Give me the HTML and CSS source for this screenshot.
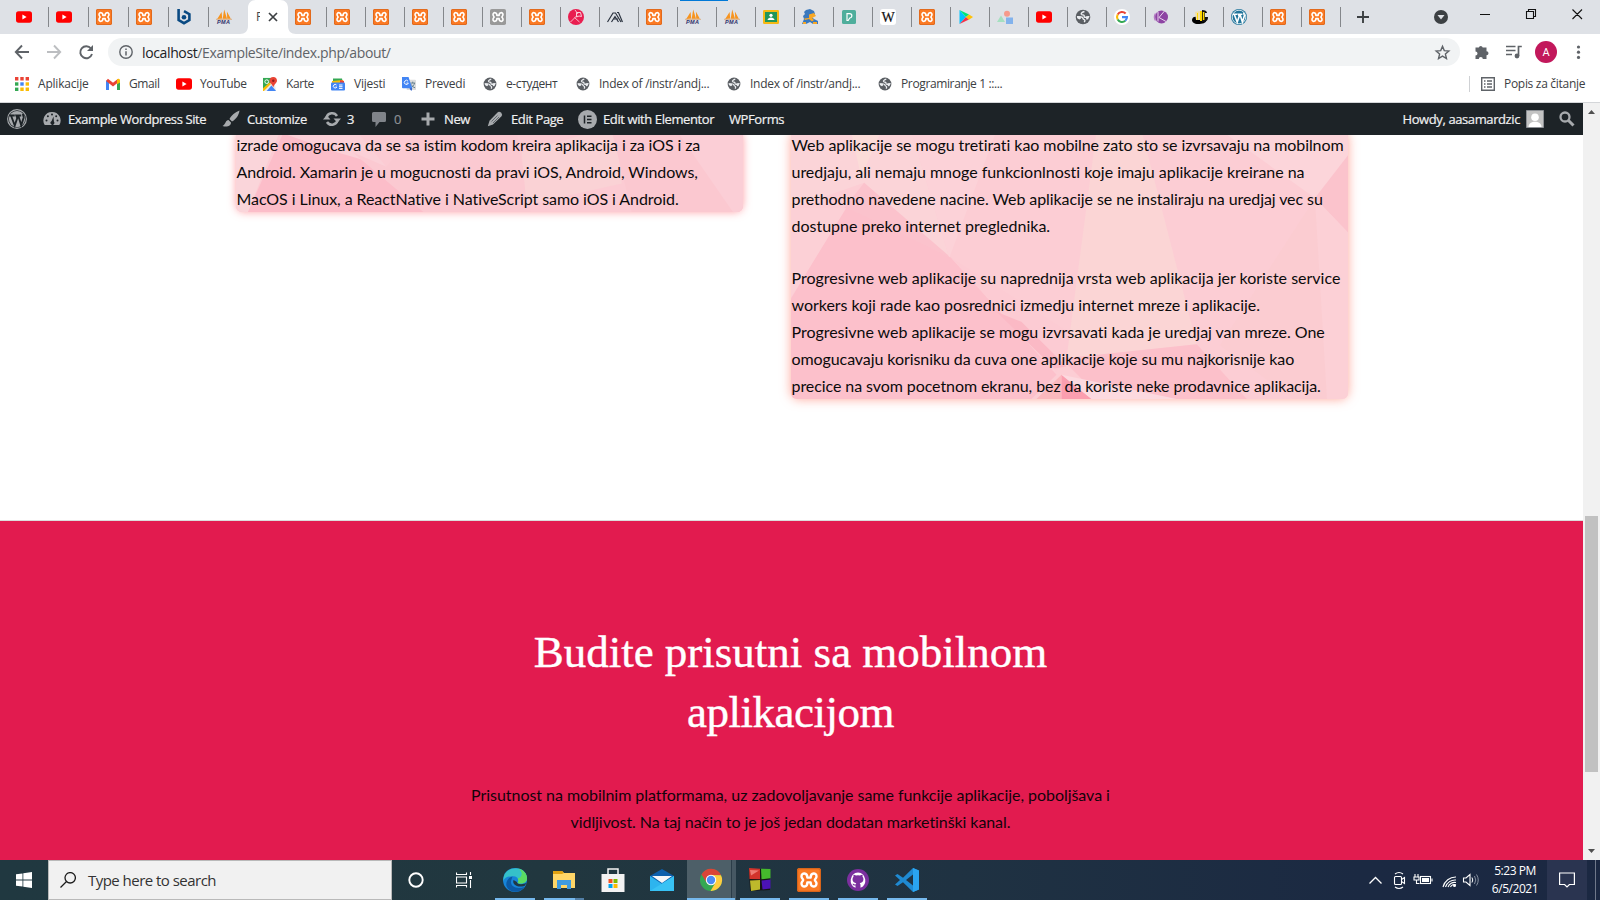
FILE: index.html
```html
<!DOCTYPE html>
<html lang="bs">
<head>
<meta charset="utf-8">
<title>About</title>
<link rel="stylesheet" href="styles.css">
</head>
<body>
<svg class="defs" width="0" height="0">
  <symbol id="yt" viewBox="0 0 16 16"><rect y="2.3" width="16" height="11.4" rx="2.6" fill="#f00"/><path d="M6.4 5.6v4.8l4.2-2.4z" fill="#fff"/></symbol>
  <symbol id="bone" viewBox="0 0 16 16"><path d="M6.900 6.400H9.100C9.100 2.800 13 3 13 5.600 13 7 11.900 7.200 11.900 8S13 9 13 10.400C13 13 9.100 13.200 9.100 9.600H6.900C6.900 13.200 3 13 3 10.400 3 9 4.100 8.800 4.100 8S3 7 3 5.600C3 3 6.900 2.800 6.900 6.400z" fill="none" stroke="#fff" stroke-width="1.600" stroke-linejoin="round"/></symbol>
  <symbol id="xampp" viewBox="0 0 16 16"><rect width="16" height="16" rx="1.8" fill="#fb7a24"/><rect x=".4" y=".4" width="15.2" height="15.2" rx="1.5" fill="none" stroke="#d8641a" stroke-width=".8"/><use href="#bone"/></symbol>
  <symbol id="xgray" viewBox="0 0 16 16"><rect width="16" height="16" rx="1.8" fill="#999"/><use href="#bone"/></symbol>
  <symbol id="hex" viewBox="0 0 16 16"><path d="M2.600 0v11L8 14.200l5.400-3.100V5.200L8 2.200" fill="none" stroke="#0a4a83" stroke-width="2.600"/><circle cx="8" cy="8.200" r="2.300" fill="#0a4a83"/></symbol>
  <symbol id="pma" viewBox="0 0 16 16"><path d="M1.200 10L5.600 3l.6 6.500zM6.700 9.700L8.200.6 11 9.700zM11.200 9.700l-.3-7.300 3.900 7.300z" fill="#f7941e"/><path d="M0 10.300h16" stroke="#d98b3c" stroke-width=".6"/><text x="7.700" y="15.400" class="pma-t">PMA</text></symbol>
  <symbol id="pink" viewBox="0 0 16 16"><circle cx="8" cy="8" r="8" fill="#e91e50"/><path d="M2.500 13L9 6.500M6.500 8.500l5 4.500M7 1l3 4" stroke="#f9b7c7" stroke-width="1"/><path d="M8.500 3.500h4l1 4-2.500-.500-2.500 1z" fill="none" stroke="#f9d0da"/></symbol>
  <symbol id="aa" viewBox="0 0 16 16"><path d="M.5 13L6 4h2.500l5.500 9M4.500 13L8 7.500l3.500 5.500M6 10h5M10 3.500h1.500l4 9.500" fill="none" stroke="#2b3340" stroke-width="1.200"/></symbol>
  <symbol id="class" viewBox="0 0 16 16"><rect y="1" width="16" height="14" rx="1.2" fill="#f5b914"/><rect x="2" y="3" width="12" height="10" fill="#21965a"/><circle cx="8" cy="6.3" r="1.6" fill="#fff"/><path d="M4.500 11c.4-3.400 6.600-3.400 7 0z" fill="#fff"/></symbol>
  <symbol id="camel" viewBox="0 0 16 16"><path d="M4 1l4-1 4 2 1 3-4 2 3 3 4 2v3h-5l-3-2-4 2H0l2-5-1-3 2-2-1-2z" fill="#3a78bd"/><path d="M7 5.500l5-1.500 2 3-4 2 2 2-2 1.500-3-2.500-4 1-1-1.500 5-.5zM11 13h4v2h-4zM1 13h3v2H1z" fill="#f9a825"/></symbol>
  <symbol id="pgreen" viewBox="0 0 16 16"><rect x="1" y="1" width="14" height="14" rx="1.500" fill="#4fae9c"/><path d="M6 11.500V4.700h2.700a2 2 0 010 4.300l-1.500 2.500z" fill="none" stroke="#fff" stroke-width="1.200"/></symbol>
  <symbol id="wiki" viewBox="0 0 16 16"><rect width="16" height="16" rx="3" fill="#fff"/><text x="8" y="13" class="wiki-t">W</text></symbol>
  <symbol id="play" viewBox="0 0 16 16"><path d="M1.500 1v14L8 8z" fill="#00c3ff"/><path d="M1.500 1L8 8l3-2.500z" fill="#00e676"/><path d="M1.500 15L8 8l3 2.600z" fill="#f43249"/><path d="M11 5.400L8 8l3 2.700L15 8z" fill="#ffc107"/></symbol>
  <symbol id="shapes" viewBox="0 0 16 16"><path d="M0 13l4-6.500L8 13z" fill="#a4e0c0"/><circle cx="10" cy="4.700" r="3" fill="#f69a8c"/><rect x="9" y="8.500" width="7" height="6.500" fill="#82b2ec"/></symbol>
  <symbol id="globe" viewBox="0 0 16 16"><circle cx="8" cy="8" r="7.300" fill="#5a5e63"/><path d="M9.500 2.500C7.500 3 5.800 4 6.300 5.200c.5 1 2.300.3 2.800 1.300.4 1-.4 1.400.7 1.800 1.300.4 3-1 4.500-.5M2 7.800c1.500-.1 3-.1 4.500.2 1.800.3 1 1.800 2.300 2.300 1.500.6 1.300 1.700.4 2.900" fill="none" stroke="#eceef1" stroke-width="1.400"/><path d="M1.800 7.500l3.700.2.500 1.800-1.500 1-2-1zM10.500 7.500l3.700-.3-1 3-1.700.5z" fill="#eceef1"/></symbol>
  <symbol id="google" viewBox="0 0 16 16"><circle cx="8" cy="8" r="8" fill="#fff"/><g fill="none" stroke-width="2.100"><path d="M3.700 5.500A5 5 0 0111.600 4.500" stroke="#ea4335"/><path d="M3.700 5.500a5 5 0 000 5" stroke="#fbbc05"/><path d="M3.700 10.500a5 5 0 007.600 1.300" stroke="#34a853"/><path d="M11.300 11.800A5 5 0 0013 8.100H8" stroke="#4285f4"/></g></symbol>
  <symbol id="kk" viewBox="0 0 16 16"><circle cx="8.500" cy="8" r="6.500" fill="#8d44a3"/><path d="M5 3v9.500M11.500 2L6 8.500l7 4" fill="none" stroke="#e8d4ee" stroke-width="1"/><path d="M2.500 4.500q-2 3.500 0 7" fill="none" stroke="#b47cc4" stroke-width="1.500"/></symbol>
  <symbol id="bee" viewBox="0 0 16 16"><path d="M0 11c0-3 3-4 5-3l9 3c1 3-4 4-8 4s-6-2-6-4z" fill="#000"/><path d="M3 3l4-1 4 1v8H4z" fill="#f0dfa8"/><path d="M10 1c3 0 5 1 5 3h-2v4h3c0 4-2 5-6 5z" fill="#111"/><path d="M5 4h1v7H5zM8 2h2v10H8zM10.800 3h1.600v8h-1.600z" fill="#ffd800"/></symbol>
  <symbol id="wpb" viewBox="0 0 16 16"><circle cx="8" cy="8" r="8" fill="#21759b"/><circle cx="8" cy="8" r="6.800" fill="none" stroke="#fff" stroke-width=".8"/><path d="M1.800 5.200h4.400M3.200 5.200l3 8 2-6-.8-2h4M9 5.200l2.400 7.800L13.300 7c.3-1.200-.9-2-.4-3.200" fill="none" stroke="#fff" stroke-width="1.600"/></symbol>
  <symbol id="wpg" viewBox="0 0 16 16"><circle cx="8" cy="8" r="7.500" fill="none" stroke="#a7aaad" stroke-width=".9"/><circle cx="8" cy="8" r="6.500" fill="#a7aaad"/><path d="M1.800 5.200h4.400M3.200 5.200l3 8 2-6-.8-2h4M9 5.200l2.400 7.800L13.300 7c.3-1.200-.9-2-.4-3.200" fill="none" stroke="#1d2327" stroke-width="1.500"/></symbol>
</svg>

<div class="browser">
  <div class="tabs">
    <i class="progress"></i>
    <div class="tab wide"><svg><use href="#yt"/></svg></div>
    <div class="tab wide"><svg><use href="#yt"/></svg></div>
    <div class="tab wide"><svg><use href="#xampp"/></svg></div>
    <div class="tab wide"><svg><use href="#xampp"/></svg></div>
    <div class="tab wide"><svg><use href="#hex"/></svg></div>
    <div class="tab wide bare"><svg><use href="#pma"/></svg></div>
    <div class="tab active"><svg class="tabshape" viewBox="0 0 56 34"><path d="M0 34c5 0 8-3 8-8V8c0-5 3-8 8-8h24c5 0 8 3 8 8v18c0 5 3 8 8 8z" fill="#fff"/></svg><span class="clip">P</span><svg class="close" viewBox="0 0 10 10"><path d="M1 1l8 8M9 1L1 9" stroke="#3c4043" stroke-width="1.700"/></svg></div>
    <div class="tab"><svg><use href="#xampp"/></svg></div>
    <div class="tab"><svg><use href="#xampp"/></svg></div>
    <div class="tab"><svg><use href="#xampp"/></svg></div>
    <div class="tab"><svg><use href="#xampp"/></svg></div>
    <div class="tab"><svg><use href="#xampp"/></svg></div>
    <div class="tab"><svg><use href="#xgray"/></svg></div>
    <div class="tab"><svg><use href="#xampp"/></svg></div>
    <div class="tab"><svg><use href="#pink"/></svg></div>
    <div class="tab"><svg><use href="#aa"/></svg></div>
    <div class="tab"><svg><use href="#xampp"/></svg></div>
    <div class="tab"><svg><use href="#pma"/></svg></div>
    <div class="tab"><svg><use href="#pma"/></svg></div>
    <div class="tab"><svg><use href="#class"/></svg></div>
    <div class="tab"><svg><use href="#camel"/></svg></div>
    <div class="tab"><svg><use href="#pgreen"/></svg></div>
    <div class="tab"><svg><use href="#wiki"/></svg></div>
    <div class="tab"><svg><use href="#xampp"/></svg></div>
    <div class="tab"><svg><use href="#play"/></svg></div>
    <div class="tab"><svg><use href="#shapes"/></svg></div>
    <div class="tab"><svg><use href="#yt"/></svg></div>
    <div class="tab"><svg><use href="#globe"/></svg></div>
    <div class="tab"><svg><use href="#google"/></svg></div>
    <div class="tab"><svg><use href="#kk"/></svg></div>
    <div class="tab"><svg><use href="#bee"/></svg></div>
    <div class="tab"><svg><use href="#wpb"/></svg></div>
    <div class="tab"><svg><use href="#xampp"/></svg></div>
    <div class="tab"><svg><use href="#xampp"/></svg></div>
    <svg class="newtab" viewBox="0 0 12 12"><path d="M6 0v12M0 6h12" stroke="#3c4043" stroke-width="1.900"/></svg>
    <svg class="winctl" viewBox="0 0 166 34"><circle cx="15" cy="17" r="7" fill="#3c4043"/><path d="M11.500 15h7L15 19.500z" fill="#dee1e6"/><path d="M54 14.500h10M100.500 11.500h7v7h-7zM102.500 11v-1.500h7v7H108M146.500 9.500l9.500 9.500M156 9.500l-9.500 9.500" fill="none" stroke="#111" stroke-width="1.100"/></svg>
  </div>

  <div class="toolbar">
    <svg class="nav" viewBox="0 0 96 36"><path d="M29 18H16M22 11.500L15.800 18l6.200 6.500" fill="none" stroke="#5f6368" stroke-width="1.900"/><path d="M47 18h13M54 11.500l6.200 6.500-6.200 6.500" fill="none" stroke="#bcbec1" stroke-width="1.900"/><path d="M91 14.500A6 6 0 1092 20" fill="none" stroke="#5f6368" stroke-width="1.900"/><path d="M93 11v6h-6z" fill="#5f6368"/></svg>
    <div class="omnibox">
      <svg class="info" viewBox="0 0 14 14"><circle cx="7" cy="7" r="6.200" fill="none" stroke="#5f6368" stroke-width="1.400"/><path d="M7 6.200v4.300M7 3.400v1.500" stroke="#5f6368" stroke-width="1.500"/></svg>
      <span class="url"><b>localhost</b>/ExampleSite/index.php/about/</span>
      <svg class="star" viewBox="0 0 24 24"><path d="M12 3.300l2.500 6 6.500.6-4.900 4.300 1.500 6.400-5.600-3.400-5.600 3.400 1.500-6.400L3 9.900l6.500-.6z" fill="none" stroke="#5f6368" stroke-width="2"/></svg>
    </div>
    <svg class="exts" viewBox="0 0 140 36"><path d="M15.500 13.500h3.300a2 2 0 013.900 0h3.800v3.800a2 2 0 010 4V25h-3.700a2 2 0 00-4 0h-3.300v-3.600a2 2 0 000-4z" fill="#5f6368"/><path d="M46 12.500h9.500M46 16.500h9.500M46 20.500h6" stroke="#5f6368" stroke-width="1.700"/><path d="M58.500 22v-9.500h3.300" fill="none" stroke="#5f6368" stroke-width="1.700"/><circle cx="57" cy="22" r="2.400" fill="#5f6368"/><circle cx="86" cy="18" r="11" fill="#c2185b"/><g fill="#5f6368"><circle cx="118.500" cy="13" r="1.600"/><circle cx="118.500" cy="18.200" r="1.600"/><circle cx="118.500" cy="23.400" r="1.600"/></g><text x="86" y="22" class="avatar-t">A</text></svg>
  </div>

  <div class="bookmarks">
    <div class="bm b1"><svg viewBox="0 0 14 14"><g fill="#ea4335"><path d="M0 0h3.400v3.400H0zM5.300 0h3.400v3.400H5.300zM10.600 0H14v3.400h-3.400z"/></g><path d="M0 5.300h3.400v3.400H0z" fill="#34a853"/><path d="M5.300 5.300h3.400v3.400H5.300z" fill="#4285f4"/><path d="M10.600 5.300H14v3.400h-3.400z" fill="#fbbc05"/><path d="M0 10.600h3.400V14H0z" fill="#34a853"/><path d="M5.300 10.600h3.400V14H5.300zM10.600 10.600H14V14h-3.400z" fill="#fbbc05"/></svg><span>Aplikacije</span></div>
    <div class="bm b2"><svg viewBox="0 0 14 14"><path d="M1.500 13V3.500" stroke="#4285f4" stroke-width="3"/><path d="M12.500 13V3.500" stroke="#34a853" stroke-width="3"/><path d="M1 2.800l6 4.800 6-4.800" fill="none" stroke="#ea4335" stroke-width="3"/><path d="M11 2.500c1.500-1.500 3-.5 3 1v2l-3 1.800z" fill="#fbbc05"/></svg><span>Gmail</span></div>
    <div class="bm b3"><svg><use href="#yt"/></svg><span>YouTube</span></div>
    <div class="bm b4"><svg viewBox="0 0 15 15"><path d="M0 1h11v14H0z" fill="#34a853"/><path d="M0 13L12 3l2 12H1z" fill="#e8eaed"/><path d="M4 15l5-6 5 6z" fill="#4285f4"/><path d="M0 12l7-6 1.500 1.500L1 15H0z" fill="#fbbc05"/><path d="M11 0c2.500 0 4 1.600 4 4 0 2.200-2.500 3-4 7-1.500-4-4-4.800-4-7 0-2.400 1.500-4 4-4z" fill="#ea4335"/><circle cx="11" cy="4" r="1.300" fill="#8c1d18"/><circle cx="4" cy="5" r="2" fill="none" stroke="#fff"/></svg><span>Karte</span></div>
    <div class="bm b5"><svg viewBox="0 0 14 14"><path d="M2 1.500h9l1 5H2z" fill="#34a853"/><path d="M1 4l11-1 1 5H1z" fill="#fbbc05"/><path d="M9 3l4 1v3H9z" fill="#ea4335"/><rect y="5.500" width="14" height="8" rx="1" fill="#4285f4"/><path d="M5.500 8a1.800 1.800 0 10.300 2H4.500M8 8h3.500M8 9.700h3.500M8 11.400h3.500" fill="none" stroke="#fff"/></svg><span>Vijesti</span></div>
    <div class="bm b6"><svg viewBox="0 0 15 15"><rect x="5" y="3" width="10" height="11" rx="1" fill="#dcdcdc"/><path d="M9 6.500h5M11.500 5v1.500M13.500 6.500c-.5 2-2 4-4 5M10 8c1 2 2 3 4 3.500" fill="none" stroke="#607d8b"/><path d="M0 0h7l4 12H1q-1 0-1-1z" fill="#4285f4"/><path d="M8 12h3l-1 3z" fill="#1a4fc4"/><path d="M6.500 4.500a2.200 2.200 0 10.300 2H4.800" fill="none" stroke="#fff"/></svg><span>Prevedi</span></div>
    <div class="bm b7"><svg><use href="#globe"/></svg><span>е-студент</span></div>
    <div class="bm b8"><svg><use href="#globe"/></svg><span>Index of /instr/andj...</span></div>
    <div class="bm b8"><svg><use href="#globe"/></svg><span>Index of /instr/andj...</span></div>
    <div class="bm b9"><svg><use href="#globe"/></svg><span>Programiranje 1 ::...</span></div>
    <div class="bm reading"><svg viewBox="0 0 14 14"><path d="M.7.700h12.600v12.600H.7z" fill="none" stroke="#5f6368" stroke-width="1.400"/><path d="M3 4h1.500M6 4h5M3 7h1.500M6 7h5M3 10h1.500M6 10h5" stroke="#5f6368" stroke-width="1.400"/></svg><span>Popis za čitanje</span></div>
  </div>
</div>

<div class="viewport">
  <div class="site">
    <div class="adminbar">
      <div class="ab a0"><svg><use href="#wpg"/></svg></div>
      <div class="ab a1"><svg viewBox="0 0 18 18"><path d="M9 2a8.500 8.500 0 00-7.300 13h14.600A8.500 8.500 0 009 2z" fill="#a7aaad"/><g fill="#1d2327"><circle cx="9" cy="4.500" r="1"/><circle cx="4.900" cy="6.200" r="1"/><circle cx="13.200" cy="6.200" r="1"/><circle cx="3.500" cy="10.500" r="1"/><circle cx="14.500" cy="10.500" r="1"/><path d="M10.500 6.500l.4 5a2 2 0 11-2.300-.5z"/></g></svg><span>Example Wordpress Site</span></div>
      <div class="ab a2"><svg viewBox="0 0 18 18"><path d="M17.500.5c-4 1.500-8.500 5-10 8.500l2.500 2.500C14 9.500 17 5 17.500.5zM6.500 10c-3 0-2.500 4-6 6 4 1.200 8.500.5 8.500-3.500z" fill="#a7aaad"/></svg><span>Customize</span></div>
      <div class="ab a3"><svg viewBox="0 0 18 18"><path d="M3.500 7.500A5.800 5.800 0 0114 6M14.500 10.500A5.800 5.800 0 014 12" fill="none" stroke="#a7aaad" stroke-width="2.500"/><path d="M10.500 8.500H18l-3.600 4.300zM7.500 9.500H0l3.600-4.300z" fill="#a7aaad"/></svg><span>3</span></div>
      <div class="ab a4"><svg viewBox="0 0 16 16"><path d="M2.500 1h11Q15 1 15 2.500v7q0 1.500-1.500 1.500H8.500l-4 5v-5h-2Q1 11 1 9.500v-7Q1 1 2.500 1z" fill="#80848a"/></svg><span class="dim">0</span></div>
      <div class="ab a5"><svg viewBox="0 0 14 14"><path d="M7 .5v13M.5 7h13" stroke="#a7aaad" stroke-width="3"/></svg><span>New</span></div>
      <div class="ab a6"><svg viewBox="0 0 16 16"><path d="M10.500 1.500q1.500-1.500 3.800.3 1.600 2.200 0 3.800L6 13.500.8 15.300l1.700-5.500z" fill="#a7aaad"/><path d="M4.500 10.500l6-6M6 12l6-6" stroke="#50575e" stroke-width=".8"/></svg><span>Edit Page</span></div>
      <div class="ab a7"><svg viewBox="0 0 19 19"><circle cx="9.500" cy="9.500" r="9.500" fill="#a7aaad"/><path d="M6.500 5.500v8M9 6.200h4.500M9 9.500h4.500M9 12.800h4.500" stroke="#1d2327" stroke-width="1.500"/></svg><span>Edit with Elementor</span></div>
      <div class="ab a8"><span>WPForms</span></div>
      <div class="ab a9"><span>Howdy, aasamardzic</span><svg class="gravatar" viewBox="0 0 18 18"><path d="M.5.500h17v17H.5z" fill="#c3c3c3" stroke="#8c8f94"/><circle cx="9" cy="7.200" r="3.800" fill="#fff"/><path d="M2.500 17c0-7 13-7 13 0z" fill="#fff"/></svg><svg class="find" viewBox="0 0 16 16"><circle cx="6" cy="6" r="4.500" fill="none" stroke="#a7aaad" stroke-width="2.300"/><path d="M9.500 9.500l5 5" stroke="#a7aaad" stroke-width="3"/></svg></div>
    </div>

    <div class="columns">
      <div class="card first">
        <svg class="art" viewBox="0 0 506 77" preserveAspectRatio="none"><path d="M0 0h506v77H0z" fill="#fccbd3"/><path d="M0 0h44L12 77H0z" fill="#fad5da"/><path d="M48 0L12 77h178L116 20 100 0z" fill="#fcbdc9"/><path d="M40 0h80l30 34-50-14z" fill="#fbd0d7"/><path d="M116 20l34 14 30-34h100l14 77H187z" fill="#fbc9d1"/><path d="M285 20l75-20h20l5 50-95 20z" fill="#fad2d5"/><path d="M375 0l20 77h111V0z" fill="#fbc8d0"/><path d="M440 0h66v77h-10z" fill="#fbced6"/></svg>
        <p><span class="t10">izrade omogucava da se sa istim kodom kreira aplikacija i za iOS i za</span><br><span class="t9">Android. Xamarin je u mogucnosti da pravi iOS, Android, Windows,</span><br><span class="t7">MacOS i Linux, a ReactNative i NativeScript samo iOS i Android.</span></p>
      </div>
      <div class="card second">
        <svg class="art" viewBox="0 0 556 264" preserveAspectRatio="none"><path d="M0 0h556v264H0z" fill="#fccdd4"/><path d="M0 0h120l38 125L73 51 0 76z" fill="#fbd4d8"/><path d="M60 0h30L70 45z" fill="#fbdcd8"/><path d="M73 51L50 80l110 45z" fill="#fbc2cc"/><path d="M120 0l38 125L205 0z" fill="#fcd2d8"/><path d="M55 75L0 165v99h240l25-24-105-115z" fill="#fcc0cb"/><path d="M0 76v88l55-88z" fill="#fcd0d6"/><path d="M160 125l105 113 20-35z" fill="#fccbd3"/><path d="M205 178l25 10 45 44-12 2z" fill="#fbb9c5"/><path d="M305 0h45l55 210-130 14z" fill="#fbd5d5"/><path d="M430 0h126v30l-33 36z" fill="#fcd5da"/><path d="M523 66l33-42v76z" fill="#fbc3cc"/><path d="M523 66l-95 145 73 53h45z" fill="#fbccd1"/><path d="M523 66l12 198h21V100z" fill="#fcd0d6"/><path d="M270 224l135-14 50 54H310z" fill="#fcc0ca"/><path d="M270 240l-25 24h25z" fill="#fbb8bd"/><path d="M270 240v24h30z" fill="#fb9eaf"/><path d="M270 240l30 24h85z" fill="#fcd9df"/></svg>
        <p><span class="t7">Web aplikacije se mogu tretirati kao mobilne zato sto se izvrsavaju na mobilnom</span><br><span class="t3">uredjaju, ali nemaju mnoge funkcionlnosti koje imaju aplikacije kreirane na</span><br><span class="t8">prethodno navedene nacine. Web aplikacije se ne instaliraju na uredjaj vec su</span><br>dostupne preko internet preglednika.</p>
        <p>Progresivne web aplikacije su naprednija vrsta web aplikacija jer koriste service<br><span class="t3">workers koji rade kao posrednici izmedju internet mreze i aplikacije.</span><br><span class="t3">Progresivne web aplikacije se mogu izvrsavati kada je uredjaj van mreze. One</span><br><span class="t8">omogucavaju korisniku da cuva one aplikacije koje su mu najkorisnije kao</span><br><span class="t8">precice na svom pocetnom ekranu, bez da koriste neke prodavnice aplikacija.</span></p>
      </div>
    </div>

    <div class="cta">
      <h2><span>Budite prisutni sa mobilnom</span><br><span class="l2">aplikacijom</span></h2>
      <p><span class="t4">Prisutnost na mobilnim platformama, uz zadovoljavanje same funkcije aplikacije, poboljšava i</span><br><span class="t8">vidljivost. Na taj način to je još jedan dodatan marketinški kanal.</span></p>
    </div>
  </div>
  <div class="scrollbar"><svg viewBox="0 0 17 17"><path d="M5 11l3.500-4 3.500 4z" fill="#505050"/></svg><div class="thumb"></div><svg class="down" viewBox="0 0 17 17"><path d="M5 6l3.500 4L12 6z" fill="#505050"/></svg></div>
</div>

<div class="taskbar">
  <div class="start"><svg viewBox="0 0 16 16"><path d="M0 2.300L6.500 1.400v6.100H0zM7.300 1.300L16 0v7.500H7.300zM0 8.400h6.500v6.200L0 13.700zM7.300 8.400H16V16l-8.700-1.300z" fill="#fff"/></svg></div>
  <div class="search"><svg viewBox="0 0 16 16"><circle cx="10.200" cy="5.800" r="5.200" fill="none" stroke="#1b1b1b" stroke-width="1.300"/><path d="M6.500 9.500L.5 15.500" stroke="#1b1b1b" stroke-width="1.300"/></svg><span>Type here to search</span></div>
  <div class="sys"><svg viewBox="0 0 16 16"><circle cx="8" cy="8" r="6.700" fill="none" stroke="#fff" stroke-width="1.900"/></svg></div>
  <div class="sys second-sys"><svg viewBox="0 0 16 16"><path d="M.5.500v2h10v-2M.5 15.500v-2h10v2M.5 5h10v6H.5zM14.500 0v3M14.500 8v8" fill="none" stroke="#fff" stroke-width="1.100"/><path d="M13 4h3v3h-3z" fill="#fff"/></svg></div>
  <div class="app open"><svg viewBox="0 0 24 24"><circle cx="12" cy="12" r="12" fill="#1784d8"/><path d="M1 8C4-2 23-3 24 10c0 5-5 6.500-9.500 5 2-2 .5-6.500-3.500-6.800C6 7.800 1.500 9.500.1 13z" fill="#35c1c9"/><path d="M15 .5C21 2 24 6 24 10.500c0 4.500-5 6-9.500 4.500 1.200-1.500.8-3.500.3-4.500C20 9 20 3 15 .5z" fill="#5bdc62"/><path d="M8.500 11.500C6 18 13 22 21.500 19 17 26 6 25 3.500 18c-1-4 1.500-8.500 6-9.500z" fill="#0c59a4"/><path d="M10.500 12c-1.500 4 3 8 11 6l2.500-3.500c-3 2.200-10 2.500-10-.5z" fill="#203744"/></svg></div>
  <div class="app open split"><svg viewBox="0 0 24 24"><path d="M1 3h9l2 2h11v15H1z" fill="#ffd667"/><path d="M1 3h9l2 2-2 1H1z" fill="#e0a112"/><path d="M5 12h14v9h-4v-4H9v4H5z" fill="#3f9be0"/></svg></div>
  <div class="app"><svg viewBox="0 0 24 24"><path d="M7 7V1h10v6" fill="none" stroke="#f5f5f5" stroke-width="1.500"/><path d="M.5 6h23v18H.5z" fill="#f3f3f3"/><path d="M7.500 11h4v4h-4z" fill="#f25022"/><path d="M12.500 11h4v4h-4z" fill="#7fba00"/><path d="M7.500 16h4v4h-4z" fill="#00a4ef"/><path d="M12.500 16h4v4h-4z" fill="#ffb900"/></svg></div>
  <div class="app"><svg viewBox="0 0 24 24"><path d="M0 8l12-7 12 7v15H0z" fill="#0c5fac"/><path d="M0 8l12 8 12-8v15H0z" fill="#2db4ee"/><path d="M2 8h20l-10 7z" fill="#f4f6f8"/><path d="M0 23l24-15v15z" fill="#38c2f4"/></svg></div>
  <div class="app open current"><svg viewBox="0 0 24 24"><circle cx="12" cy="12" r="11" fill="#34a853"/><path d="M2.500 6.500A11 11 0 0122 7H12l-4.500 7.500z" fill="#db4437"/><path d="M22 7.200A11 11 0 0111.500 23l5-8.500L12 7z" fill="#ffcd40"/><circle cx="12" cy="12" r="5.200" fill="#fff"/><circle cx="12" cy="12" r="4.200" fill="#4c8bf5"/></svg></div>
  <div class="app open"><svg viewBox="0 0 24 24"><path d="M1 1h21v21l-20 1z" fill="#151515"/><path d="M1 0l11 .8v10.500L1.500 11z" fill="#d3332b"/><path d="M13 .8L22.500 1v9.300l-9 1z" fill="#45b82c"/><path d="M2 12.500l10-.5v9.500L3 23z" fill="#bdb92b"/><path d="M13.500 12.500l9-1v9l-8 1z" fill="#4b13b5"/><path d="M2 2l9 .5-8 5z" fill="#ef7a72"/></svg></div>
  <div class="app open"><svg><use href="#xampp"/></svg></div>
  <div class="app open"><svg viewBox="0 0 24 24"><circle cx="12" cy="12" r="11" fill="#7b2f9e"/><path d="M12 4.500a8 8 0 00-2.500 15.300v-2.300c-2 .4-2.500-.6-3-1.700 1.400-.2 1.300 1 3.100.6.100-.5.300-.9.700-1.200-4-.5-4.600-4.400-2.800-6.400-.2-.8-.1-1.600.1-2.100 1 0 1.700.4 2.400.9a8 8 0 014 0c.8-.5 1.500-.9 2.400-.9.300.7.300 1.400.1 2.100 1.800 2 1.200 5.900-2.800 6.400.7.600.8 1.300.8 2v2.600A8 8 0 0012 4.500z" fill="#fff"/></svg></div>
  <div class="app open"><svg viewBox="0 0 24 24"><path d="M18 0l6 2.500v19L18 24 8 14.200 2.500 18 0 16.500 5 12 0 7.500 2.500 6 8 9.800zM18 6.500L11 12l7 5.500z" fill="#1f8ad2" fill-rule="evenodd"/><path d="M18 0l6 2.500v19L18 24z" fill="#2aa4f0"/></svg></div>
  <svg class="tray" viewBox="0 0 120 40"><path d="M1.500 23.500l6-6 6 6" fill="none" stroke="#fff" stroke-width="1.300"/><g fill="none" stroke="#fff" stroke-width="1.100"><rect x="26.500" y="16.500" width="7" height="8" rx="1"/><path d="M33.500 19.500l3-2v6l-3-2M27 14q4-3 8 0M27 27q4 3 8 0"/><rect x="52.500" y="16.500" width="10" height="7"/><path d="M64 18.500v3M50 14v3M47 14v3M46 17h5v3h-5zM48.500 20v3.500h3M75 27a13 13 0 0113-10M77.500 27a10 10 0 0110.500-7M80 27a7 7 0 018-4.500M82.500 27a4 4 0 015.500-2"/></g><path d="M54 18h7v4h-7z" fill="#fff"/><circle cx="86.500" cy="25.500" r="1.500" fill="#fff"/><path d="M95.500 18h2.500l4-3.500v11L98 22h-2.500z" fill="none" stroke="#fff" stroke-width="1.100"/><path d="M104 17.500q1.500 2.500 0 5" fill="none" stroke="#fff"/><path d="M106.500 16q2.500 4 0 8M108.500 14.500q3.500 5.500 0 11" fill="none" stroke="#8790a0"/></svg>
  <div class="clock"><span>5:23 PM</span><span class="date">6/5/2021</span></div>
  <div class="notify"><svg viewBox="0 0 16 16"><path d="M.6 1h14.800v11.500h-5L8 15l-2.400-2.500h-5z" fill="none" stroke="#fff" stroke-width="1.200"/></svg></div>
  <div class="peek"></div>
</div>
</body>
</html>
```

FILE: styles.css
```css
* { box-sizing: border-box; }
body { margin: 0; width: 1600px; height: 900px; overflow: hidden; display: flex; flex-direction: column; font-family: "Open Sans", "Noto Sans", sans-serif; background: #fff; }
svg { display: block; flex: none; }
.defs { display: none; }
span { white-space: nowrap; }

/* browser chrome */
.browser { height: 103px; border-bottom: 1px solid #d4d6d9; flex: none; }
.tabs { position: relative; height: 34px; background: #dee1e6; display: flex; padding-left: 9px; }
.progress { position: absolute; left: 680px; top: 0; width: 48px; height: 1px; background: #0078d7; }
.tab { position: relative; width: 39px; padding: 9px 0 0 7px; flex: none; }
.tab svg { width: 16px; height: 16px; }
.tab::after { content: ""; position: absolute; right: 0; top: 7px; width: 1px; height: 20px; background: #84878b; }
.tab.wide { width: 40px; }
.tab.bare::after, .tab.active::after { display: none; }
.tab .tabshape { position: absolute; left: -9px; top: 0; width: 56px; height: 34px; }
.tab.active { display: flex; padding: 9px 0 0 7px; }
.clip { position: relative; width: 4px; overflow: hidden; font-size: 12px; line-height: 16px; color: #45484c; }
.tab .close { position: relative; width: 10px; height: 10px; margin: 3px 0 0 8px; }
.newtab { width: 12px; height: 12px; margin: 11px 0 0 16px; }
.winctl { width: 166px; height: 34px; margin-left: 57px; }
.pma-t { font: italic bold 5.500px "Liberation Sans", sans-serif; letter-spacing: .4px; text-anchor: middle; fill: #2d2f6b; }
.wiki-t { font: 14px "Liberation Serif", serif; text-anchor: middle; fill: #111; stroke: #111; stroke-width: .2px; }

.toolbar { height: 36px; display: flex; align-items: center; }
.nav { width: 96px; height: 36px; }
.omnibox { width: 1352px; height: 28px; margin-left: 12px; border-radius: 14px; background: #f1f3f4; display: flex; align-items: center; padding: 0 9px 0 11px; }
.info { width: 14px; height: 14px; }
.url { margin-left: 9px; font-size: 14px; letter-spacing: -.37px; color: #5f6368; }
.url b { font-weight: 400; color: #202124; }
.star { width: 17px; height: 17px; margin-left: auto; }
.exts { width: 140px; height: 36px; }
.avatar-t { font: 11px Roboto, sans-serif; text-anchor: middle; fill: #fff; }

.bookmarks { height: 28px; display: flex; padding-left: 15px; font-size: 12px; letter-spacing: -.4px; color: #3c4043; }
.bm { display: flex; align-items: center; flex: none; }
.bm svg { width: 14px; height: 14px; }
.bm span { margin: -1px 0 0 9px; }
.b1 { width: 91px; letter-spacing: -.2px; }
.b2 { width: 70px; }
.b3 { width: 87px; }
.b3 svg { width: 16px; height: 16px; }
.b3 span { margin-left: 8px; }
.b4 { width: 68px; }
.b5 { width: 71px; letter-spacing: -.25px; }
.b6 { width: 81px; letter-spacing: -.25px; }
.b7 { width: 93px; }
.b8 { width: 151px; letter-spacing: -.27px; }
.b9 { width: 140px; letter-spacing: -.37px; }
.reading { position: relative; margin-left: auto; width: 119px; letter-spacing: -.3px; }
.reading::before { content: ""; position: absolute; left: -12px; top: 6px; width: 1px; height: 16px; background: #cfd1d4; }

/* page */
.viewport { height: 757px; display: flex; flex: none; }
.site { width: 1583px; height: 757px; overflow: hidden; display: flex; flex-direction: column; font-family: Lato, sans-serif; font-variant-ligatures: none; }
.adminbar { position: relative; z-index: 2; height: 32px; flex: none; background: #1d2327; color: #f0f0f1; display: flex; padding-left: 7px; font: 500 13px "Open Sans", sans-serif; letter-spacing: -.4px; -webkit-text-stroke: .2px currentColor; }
.ab { display: flex; align-items: center; flex: none; }
.ab span { margin-left: 7px; }
.ab svg { width: 18px; height: 18px; }
.a0 { width: 36px; }
.a0 svg { width: 20px; height: 20px; }
.a1 { width: 179px; }
.a2 { width: 101px; }
.a3 { width: 48px; }
.a3 span { margin-left: 6px; }
.a4 { width: 50px; }
.a4 svg { width: 16px; height: 16px; }
.a5 { width: 66px; }
.a5 svg { width: 14px; height: 14px; }
.a5 span { margin-left: 9px; }
.a6 { width: 91px; }
.a6 svg { width: 16px; height: 16px; }
.a6 span { margin-left: 8px; }
.a7 { width: 144px; }
.a7 svg { width: 19px; height: 19px; }
.a7 span { margin-left: 6px; }
.a9 { margin-left: auto; padding-right: 8px; }
.ab .gravatar { margin-left: 6px; }
.ab .find { width: 16px; height: 16px; margin-left: 15px; }
.dim { color: #8c8f94; }

.columns { height: 386px; flex: none; display: flex; align-items: flex-start; padding-left: 236px; border-bottom: 1px solid #dcdcdc; }
.card { position: relative; margin-top: -4px; font-size: 16px; line-height: 27px; color: #0b0b0b; white-space: nowrap; border-radius: 8px; }
.card p { position: relative; margin: 0 0 25px; }
.card p:last-child { margin: 0; }
.t3 { letter-spacing: -.03px; }
.t4 { letter-spacing: -.045px; }
.t7 { letter-spacing: -.068px; }
.t8 { letter-spacing: -.08px; }
.t9 { letter-spacing: -.085px; }
.t10 { letter-spacing: -.1px; }
.first { width: 507px; height: 81px; padding-left: .5px; box-shadow: 0 0 9px rgba(255, 110, 120, .65); }
.second { width: 557px; height: 268px; margin-left: 48px; padding-left: .5px; box-shadow: 0 0 11px rgba(255, 120, 100, .65); }
.art { position: absolute; left: 0; top: 0; width: 100%; height: 100%; border-radius: 6px; }
.cta { flex: 1; background: #e21b4f; text-align: center; padding-top: 101px; }
.cta h2 { margin: 0 2px 0 0; font: 400 45px/60px "Liberation Serif", serif; color: #fff; white-space: nowrap; -webkit-text-stroke: .4px #fff; }
.l2 { letter-spacing: -.5px; }
.cta p { margin: 39px 2px 0 0; font-size: 16px; line-height: 27px; color: #12030a; }

.scrollbar { width: 17px; background: #f1f1f1; display: flex; flex-direction: column; }
.scrollbar svg { width: 17px; height: 17px; }
.thumb { width: 13px; height: 256px; margin: 396px 0 0 2px; background: #c1c1c1; }
.scrollbar .down { margin-top: auto; }

/* taskbar */
.taskbar { height: 40px; display: flex; background: linear-gradient(90deg, #203840 0%, #21373f 35%, #1f3242 60%, #1b2942 85%, #1b2842 100%); color: #fff; }
.start { width: 48px; padding: 12px 0 0 16px; }
.start svg { width: 16px; height: 16px; }
.search { width: 344px; background: #f1f1f1; border: 1px solid #b9b9b9; display: flex; align-items: center; padding-left: 11px; color: #333; font-size: 15px; letter-spacing: -.53px; }
.search svg { width: 16px; height: 16px; margin-top: -1px; }
.search span { margin-left: 12px; }
.sys { width: 48px; padding: 12px 0 0 16px; }
.sys svg { width: 16px; height: 16px; }
.second-sys { width: 51px; }
.app { position: relative; width: 49px; height: 40px; flex: none; padding: 8px 0 0 12px; }
.app svg { width: 24px; height: 24px; }
.open::after { content: ""; position: absolute; left: 4px; bottom: 0; width: 40px; height: 2px; background: #76b9ed; }
.split::after { background: linear-gradient(90deg, #76b9ed 31px, #527fa6 31px); }
.current { background: linear-gradient(90deg, #4d5f68 44px, #2b3d49 44px, #2b3d49 45px, #465863 45px); }
.current::after { left: 0; width: 48px; }
.tray { width: 120px; height: 40px; margin-left: auto; }
.clock { width: 60px; display: flex; flex-direction: column; align-items: center; font-size: 12px; line-height: 18px; letter-spacing: -.45px; padding: 2px 6px 0 0; }
.notify { width: 40px; margin-left: -1px; background: #2a3450; padding: 12px 0 0 12px; }
.notify svg { width: 16px; height: 16px; }
.peek { width: 9px; border-right: 1px solid #6f788a; margin-right: 4px; }
```
